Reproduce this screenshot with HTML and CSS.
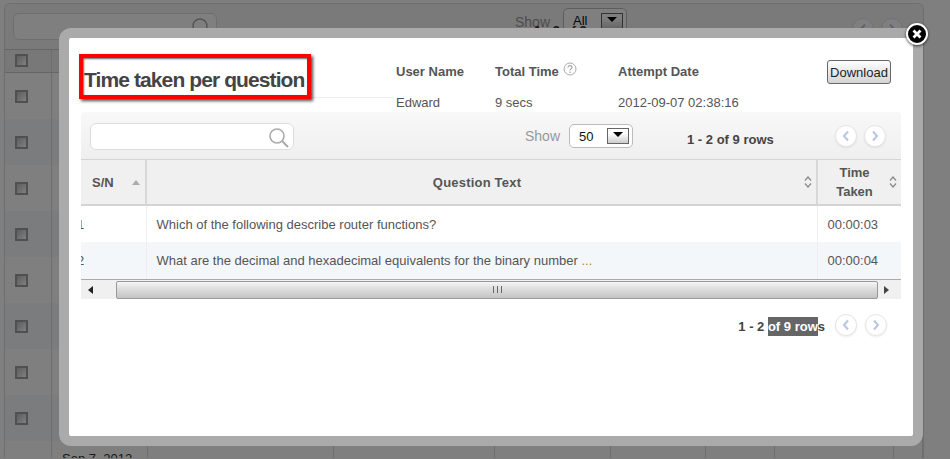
FILE: index.html
```html
<!DOCTYPE html>
<html lang="en">
<head>
    <meta charset="UTF-8">
    <meta name="viewport" content="width=device-width, initial-scale=1.0">
    <title>Time taken per question</title>
    <link rel="stylesheet" href="styles.css">
</head>
<body>
    <div class="page">
        <div class="page-toolbar">
            <div class="search-box page-search">
                <svg class="search-icon" width="22" height="22" viewBox="0 0 22 22"><circle cx="9" cy="9" r="7" fill="none" stroke="#aaa" stroke-width="1.6"/><path d="M14 14l6 6" stroke="#aaa" stroke-width="2"/></svg>
            </div>
            <span class="show-label page-show">Show</span>
            <span class="page-count">1 - 9 of 9 rows</span>
            <div class="select page-select">All<span class="select-btn"></span></div>
            <div class="pager page-pager">
                <button class="pager-btn"><svg width="10" height="12" viewBox="0 0 10 12"><path d="M7 1.5L3 6l4 4.5" fill="none" stroke="#b9c5e2" stroke-width="2"/></svg></button>
                <button class="pager-btn"><svg width="10" height="12" viewBox="0 0 10 12"><path d="M3 1.5L7 6l-4 4.5" fill="none" stroke="#b9c5e2" stroke-width="2"/></svg></button>
            </div>
        </div>
        <div class="page-row page-head"><span><i class="check"></i></span><span></span><span></span><span></span><span></span><span></span><span></span><span></span><span></span></div>
        <div class="page-row"><span><i class="check"></i></span><span></span><span></span><span></span><span></span><span></span><span></span><span></span><span></span></div>
        <div class="page-row alt"><span><i class="check"></i></span><span></span><span></span><span></span><span></span><span></span><span></span><span></span><span></span></div>
        <div class="page-row"><span><i class="check"></i></span><span></span><span></span><span></span><span></span><span></span><span></span><span></span><span></span></div>
        <div class="page-row alt"><span><i class="check"></i></span><span></span><span></span><span></span><span></span><span></span><span></span><span></span><span></span></div>
        <div class="page-row"><span><i class="check"></i></span><span></span><span></span><span></span><span></span><span></span><span></span><span></span><span></span></div>
        <div class="page-row alt"><span><i class="check"></i></span><span></span><span></span><span></span><span></span><span></span><span></span><span></span><span></span></div>
        <div class="page-row"><span><i class="check"></i></span><span></span><span></span><span></span><span></span><span></span><span></span><span></span><span></span></div>
        <div class="page-row alt"><span><i class="check"></i></span><span></span><span></span><span></span><span></span><span></span><span></span><span></span><span></span></div>
        <div class="page-row"><span><i class="check"></i></span><span class="page-date">Sep 7, 2012</span><span></span><span></span><span></span><span></span><span></span><span></span><span></span></div>
    </div>

    <div class="overlay"></div>

    <div class="modal">
        <button class="modal-close">
            <svg width="10" height="10" viewBox="0 0 10 10"><path d="M1.5 1.5l7 7M8.5 1.5l-7 7" stroke="#fff" stroke-width="2.8"/></svg>
        </button>
        <div class="modal-body">
            <div class="modal-header">
                <div class="title-wrap">
                    <h1 class="title">Time taken per question</h1>
                </div>
                <div class="meta meta-user">
                    <div class="meta-label">User Name</div>
                    <div class="meta-value">Edward</div>
                </div>
                <div class="meta meta-total">
                    <div class="meta-label">Total Time
                        <svg class="help-icon" width="14" height="14" viewBox="0 0 14 14"><circle cx="7" cy="7" r="6" fill="none" stroke="#aaa"/><path d="M5 5.500c0-2.400 4-2.400 4 0 0 1.500-2 1.500-2 3" fill="none" stroke="#aaa" stroke-width="1.200"/><path d="M7 9.500v1.500" stroke="#aaa" stroke-width="1.200"/></svg>
                    </div>
                    <div class="meta-value">9 secs</div>
                </div>
                <div class="meta meta-date">
                    <div class="meta-label">Attempt Date</div>
                    <div class="meta-value">2012-09-07 02:38:16</div>
                </div>
                <button class="download-btn">Download</button>
            </div>

            <div class="grid-wrap">
                <div class="grid-toolbar">
                    <div class="search-box grid-search">
                        <svg class="search-icon" width="22" height="22" viewBox="0 0 22 22"><circle cx="9" cy="9" r="7" fill="none" stroke="#aaa" stroke-width="1.6"/><path d="M14 14l6 6" stroke="#aaa" stroke-width="2"/></svg>
                    </div>
                    <span class="show-label">Show</span>
                    <div class="select">50<span class="select-btn"></span></div>
                    <span class="row-count">1 - 2 of 9 rows</span>
                    <div class="pager">
                        <button class="pager-btn"><svg width="10" height="12" viewBox="0 0 10 12"><path d="M7 1.5L3 6l4 4.5" fill="none" stroke="#b9c5e2" stroke-width="2"/></svg></button>
                        <button class="pager-btn"><svg width="10" height="12" viewBox="0 0 10 12"><path d="M3 1.5L7 6l-4 4.5" fill="none" stroke="#b9c5e2" stroke-width="2"/></svg></button>
                    </div>
                </div>

                <table class="grid">
                    <colgroup><col class="col-sn"><col><col class="col-time"></colgroup>
                    <thead>
                        <tr>
                            <th class="th-sn">S/N
                                <svg class="sort-icon" width="8" height="5" viewBox="0 0 8 5"><path d="M0 5l4-5 4 5z" fill="#aaa"/></svg>
                            </th>
                            <th class="th-text">Question Text
                                <svg class="sort-icon" width="8" height="12" viewBox="0 0 8 12"><path d="M1 4.500l3-3.500 3 3.500M1 7.500l3 3.500 3-3.500" fill="none" stroke="#888" stroke-width="1.200"/></svg>
                            </th>
                            <th class="th-time">Time<br>Taken
                                <svg class="sort-icon" width="8" height="12" viewBox="0 0 8 12"><path d="M1 4.500l3-3.500 3 3.500M1 7.500l3 3.500 3-3.500" fill="none" stroke="#888" stroke-width="1.200"/></svg>
                            </th>
                        </tr>
                    </thead>
                    <tbody>
                        <tr>
                            <td class="td-sn">1</td>
                            <td>Which of the following describe router functions?</td>
                            <td>00:00:03</td>
                        </tr>
                        <tr class="alt">
                            <td class="td-sn">2</td>
                            <td>What are the decimal and hexadecimal equivalents for the binary number <span class="more">...</span></td>
                            <td>00:00:04</td>
                        </tr>
                    </tbody>
                </table>

                <div class="scrollbar">
                    <span class="arrow-left"></span>
                    <div class="scroll-thumb"><span class="grip"></span></div>
                    <span class="arrow-right"></span>
                </div>
            </div>

            <div class="grid-footer">
                <span class="row-count">1 - 2 <span class="selected">of 9 row</span>s</span>
                <div class="pager">
                    <button class="pager-btn"><svg width="10" height="12" viewBox="0 0 10 12"><path d="M7 1.5L3 6l4 4.5" fill="none" stroke="#b9c5e2" stroke-width="2"/></svg></button>
                    <button class="pager-btn"><svg width="10" height="12" viewBox="0 0 10 12"><path d="M3 1.5L7 6l-4 4.5" fill="none" stroke="#b9c5e2" stroke-width="2"/></svg></button>
                </div>
            </div>
        </div>
    </div>
</body>
</html>
```

FILE: styles.css
```css
html, body {
    height: 100%;
}

body {
    font-family: "Liberation Sans", Arial, sans-serif;
    font-size: 13px;
    color: #444;
    background-color: #fff;
    margin: 0;
    overflow: hidden;
}

/* page behind the dialog */
.page {
    height: 455px;
    overflow: hidden;
    box-sizing: border-box;
    margin: 3px 26px 0 4px;
    border: 1px solid #ddd;
    border-bottom: 0;
    border-radius: 6px 6px 0 0;
}

.page-toolbar {
    display: flex;
    height: 45px;
    border-bottom: 1px solid #ccc;
    background-color: #f5f5f5;
    position: relative;
}

.page-search {
    margin: 9px 0 0 8px;
}

.page-show {
    margin: 8px 0 0 298px;
    line-height: 20px;
}

.page-count {
    position: absolute;
    left: 529px;
    top: 19px;
    font-weight: bold;
    color: #333;
    white-space: nowrap;
}

.page-select {
    margin: 4px 0 0 13px;
    height: 40px;
    align-items: flex-start;
    padding-top: 1px;
    box-sizing: border-box;
    font-size: 14px;
}

.page-pager {
    margin: 14px 0 0 225px;
    gap: 7px;
}

.page-row {
    display: grid;
    grid-template-columns: 47px 96px 186px 161px 116px 95px 69px 119px 1fr;
    height: 46px;
}

.page-row.alt {
    background-color: #f4f8fb;
}

.page-row > span {
    border-right: 1px solid #ddd;
    box-sizing: border-box;
}

.page-head {
    height: 22px;
    background-color: #f0f0f0;
    border-bottom: 1px solid #ccc;
}

.page-date {
    padding: 10px 0 0 10px;
    color: #333;
}

.check {
    display: block;
    width: 9px;
    height: 9px;
    margin: 17px 0 0 10px;
    border: 2px solid #a0a0a0;
    background: linear-gradient(135deg, #bbb, #fff);
}

.page-head .check {
    margin-top: 4px;
}

.overlay {
    position: fixed;
    top: 0;
    left: 0;
    right: 0;
    bottom: 0;
    background-color: rgba(0, 0, 0, 0.5);
}

/* dialog */
.modal {
    position: absolute;
    left: 59px;
    top: 28px;
    width: 844px;
    height: 398px;
    border: 10px solid #aaa;
    border-radius: 12px;
    background-color: #fff;
}

.modal-body {
    padding: 0 12px;
}

.modal-close {
    position: absolute;
    right: -15px;
    top: -15px;
    width: 18px;
    height: 18px;
    padding: 0;
    display: flex;
    align-items: center;
    justify-content: center;
    background-color: #000;
    border: 2px solid #fff;
    border-radius: 50%;
    box-sizing: content-box;
    box-shadow: 0 1px 3px rgba(0, 0, 0, 0.7);
}

.modal-header {
    display: flex;
    height: 74px;
}

.title-wrap {
    width: 315px;
    height: 60px;
    margin-left: -2px;
    border-bottom: 1px solid #eee;
    box-sizing: border-box;
    padding-top: 16px;
}

.title {
    width: 232px;
    height: 45px;
    margin: 0;
    box-sizing: border-box;
    border: 4px solid #f00;
    box-shadow: 2px 2px 3px rgba(0, 0, 0, 0.7), inset 1px 1px 2px rgba(0, 0, 0, 0.6);
    background-color: #fff;
    font-size: 21px;
    line-height: 44px;
    letter-spacing: -0.9px;
    padding-left: 1px;
    color: #444;
    white-space: nowrap;
}

.meta {
    padding: 26px 0 0;
    margin-left: 1px;
    box-sizing: border-box;
}

.meta-user {
    width: 98px;
    margin-left: 2px;
}

.meta-total {
    width: 122px;
}

.meta-date {
    width: 209px;
}

.meta-label {
    font-weight: bold;
    color: #555;
    height: 31px;
    line-height: 15px;
}

.meta-value {
    line-height: 15px;
    color: #555;
}

.help-icon {
    vertical-align: top;
    margin: -2px 0 0 1px;
}

.download-btn {
    width: 64px;
    height: 24px;
    margin-top: 22px;
    padding: 0;
    font-family: inherit;
    font-size: 13px;
    color: #222;
    border: 1px solid #666;
    border-radius: 3px;
    background: linear-gradient(#fdfdfd, #d4d4d4);
}

/* grid */
.grid-wrap {
    overflow: hidden;
    border-radius: 4px 4px 0 0;
}

.grid-toolbar {
    display: flex;
    align-items: center;
    height: 48px;
    box-sizing: border-box;
    padding: 1px 9px 0;
    background: linear-gradient(#f8f8f8, #efefef);
    border-bottom: 1px solid #d4d4d4;
}

.search-box {
    position: relative;
    width: 202px;
    height: 25px;
    flex: none;
    background-color: #fff;
    border: 1px solid #ddd;
    border-radius: 6px;
}

.search-icon {
    position: absolute;
    right: 3px;
    top: 3px;
}

.show-label {
    font-size: 14px;
    color: #999;
}

.grid-toolbar .show-label {
    margin-left: 231px;
}

.select {
    display: flex;
    align-items: center;
    justify-content: space-between;
    width: 64px;
    height: 24px;
    flex: none;
    box-sizing: border-box;
    padding: 0 3px 0 9px;
    background-color: #fff;
    border: 1px solid #bbb;
    border-radius: 5px;
    color: #111;
    font-size: 13px;
}

.grid-toolbar .select {
    margin-left: 9px;
}

.select-btn {
    display: block;
    width: 20px;
    height: 14px;
    flex: none;
    border: 1px solid #666;
    background: linear-gradient(#fff 30%, #ccc);
    position: relative;
}

.page-select .select-btn {
    margin-top: 2px;
}

.select-btn::after {
    content: "";
    position: absolute;
    left: 5px;
    top: 3px;
    border-style: solid;
    border-width: 5px 5px 0;
    border-color: #000 transparent transparent;
}

.row-count {
    font-weight: bold;
    color: #444;
    white-space: nowrap;
}

.grid-toolbar .row-count {
    margin: 6px 0 0 54px;
}

.pager {
    display: flex;
    gap: 7px;
}

.grid-toolbar .pager {
    margin-left: 61px;
}

.pager-btn {
    display: flex;
    align-items: center;
    justify-content: center;
    width: 22px;
    height: 22px;
    padding: 0;
    flex: none;
    background-color: #fff;
    border: 1px solid #e6e6e6;
    border-radius: 50%;
    box-shadow: 0 1px 2px rgba(0, 0, 0, 0.08);
}

.grid {
    width: 820px;
    table-layout: fixed;
    border-collapse: collapse;
}

.col-sn {
    width: 65px;
}

.col-time {
    width: 84px;
}

.grid th {
    position: relative;
    height: 45px;
    padding: 0;
    background-color: #f0f0f0;
    border-right: 2px solid #d8d8d8;
    border-bottom: 2px solid #d4d4d4;
    font-size: 13px;
    line-height: 19px;
    color: #555;
    box-sizing: border-box;
}

.grid th:last-child,
.grid td:last-child {
    border-right: 0;
}

.th-sn {
    text-align: left;
    padding-left: 11px !important;
}

.th-text {
    padding-right: 9px !important;
    letter-spacing: 0.2px;
}

.th-time {
    padding-right: 10px !important;
}

.sort-icon {
    position: absolute;
    right: 4px;
    top: 16px;
}

.th-sn .sort-icon {
    right: 5px;
    top: 20px;
}

.grid td {
    height: 37px;
    padding: 0 10px;
    box-sizing: border-box;
    border-right: 1px solid #eee;
    color: #555;
    white-space: nowrap;
    overflow: hidden;
}

.grid tr.alt td {
    background-color: #f3f7fa;
}

.grid .td-sn {
    padding: 0;
    text-indent: -4px;
}

.more {
    color: #c87a20;
}

.scrollbar {
    display: flex;
    align-items: center;
    height: 20px;
    background-color: #f0f0f0;
    border-top: 1px solid #aaa;
    box-sizing: border-box;
}

.arrow-left {
    margin-left: 7px;
    border-style: solid;
    border-width: 4px 5px 4px 0;
    border-color: transparent #222 transparent transparent;
}

.arrow-right {
    margin-left: 6px;
    border-style: solid;
    border-width: 4px 0 4px 5px;
    border-color: transparent transparent transparent #444;
}

.scroll-thumb {
    display: flex;
    align-items: center;
    justify-content: center;
    width: 762px;
    height: 18px;
    margin-left: 23px;
    box-sizing: border-box;
    background: linear-gradient(#f5f5f5, #dcdcdc 45%, #c4c4c4);
    border: 1px solid #999;
    border-radius: 2px;
}

.grip {
    width: 9px;
    height: 7px;
    background: repeating-linear-gradient(90deg, #666 0, #666 1px, transparent 1px, transparent 4px);
}

.grid-footer {
    display: flex;
    align-items: center;
    justify-content: flex-end;
    padding: 15px 14px 0 0;
    height: 21px;
}

.grid-footer .row-count {
    margin: 3px 10px 0 0;
}

.grid-footer .pager {
    gap: 8px;
}

.selected {
    background-color: #666;
    color: #fff;
    padding: 2px 0;
}
```
